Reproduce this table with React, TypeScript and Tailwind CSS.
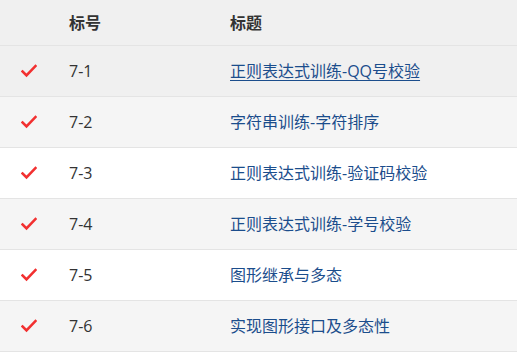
const rows = [
  { id: '7-1', title: '正则表达式训练-QQ号校验', hover: true },
  { id: '7-2', title: '字符串训练-字符排序' },
  { id: '7-3', title: '正则表达式训练-验证码校验' },
  { id: '7-4', title: '正则表达式训练-学号校验' },
  { id: '7-5', title: '图形继承与多态' },
  { id: '7-6', title: '实现图形接口及多态性' },
];

function Check() {
  return (
    <svg width="16" height="14" viewBox="0 0 16 14" fill="none">
      <path d="M1.5 7.5 L5.5 11.5 L14.5 2" stroke="#f23030" strokeWidth="2.6" strokeLinecap="square" />
    </svg>
  );
}

export default function App() {
  return (
    <div
      className="w-[517px] h-[355px] bg-white overflow-hidden text-[16px] text-[#333]"
      style={{ fontFamily: '"Open Sans", "Noto Sans CJK SC", sans-serif' }}
    >
      <div className="flex items-center h-[46px] bg-[#f0f0f0] border-b border-[#e4e4e4] font-bold">
        <div className="w-[69px]" />
        <div className="w-[161px]">标号</div>
        <div>标题</div>
      </div>
      {rows.map((r, i) => (
        <div
          key={r.id}
          className={`flex items-center h-[51px] border-b border-[#e4e4e4] ${
            r.hover ? 'bg-[#f0f0f0]' : i % 2 === 1 ? 'bg-[#f5f5f5]' : 'bg-white'
          }`}
        >
          <div className="w-[69px] pl-[21px] flex items-center">
            <Check />
          </div>
          <div className="w-[161px]">{r.id}</div>
          <div className={`text-[#1b4d8c] ${r.hover ? 'underline underline-offset-[3px]' : ''}`}>{r.title}</div>
        </div>
      ))}
    </div>
  );
}
